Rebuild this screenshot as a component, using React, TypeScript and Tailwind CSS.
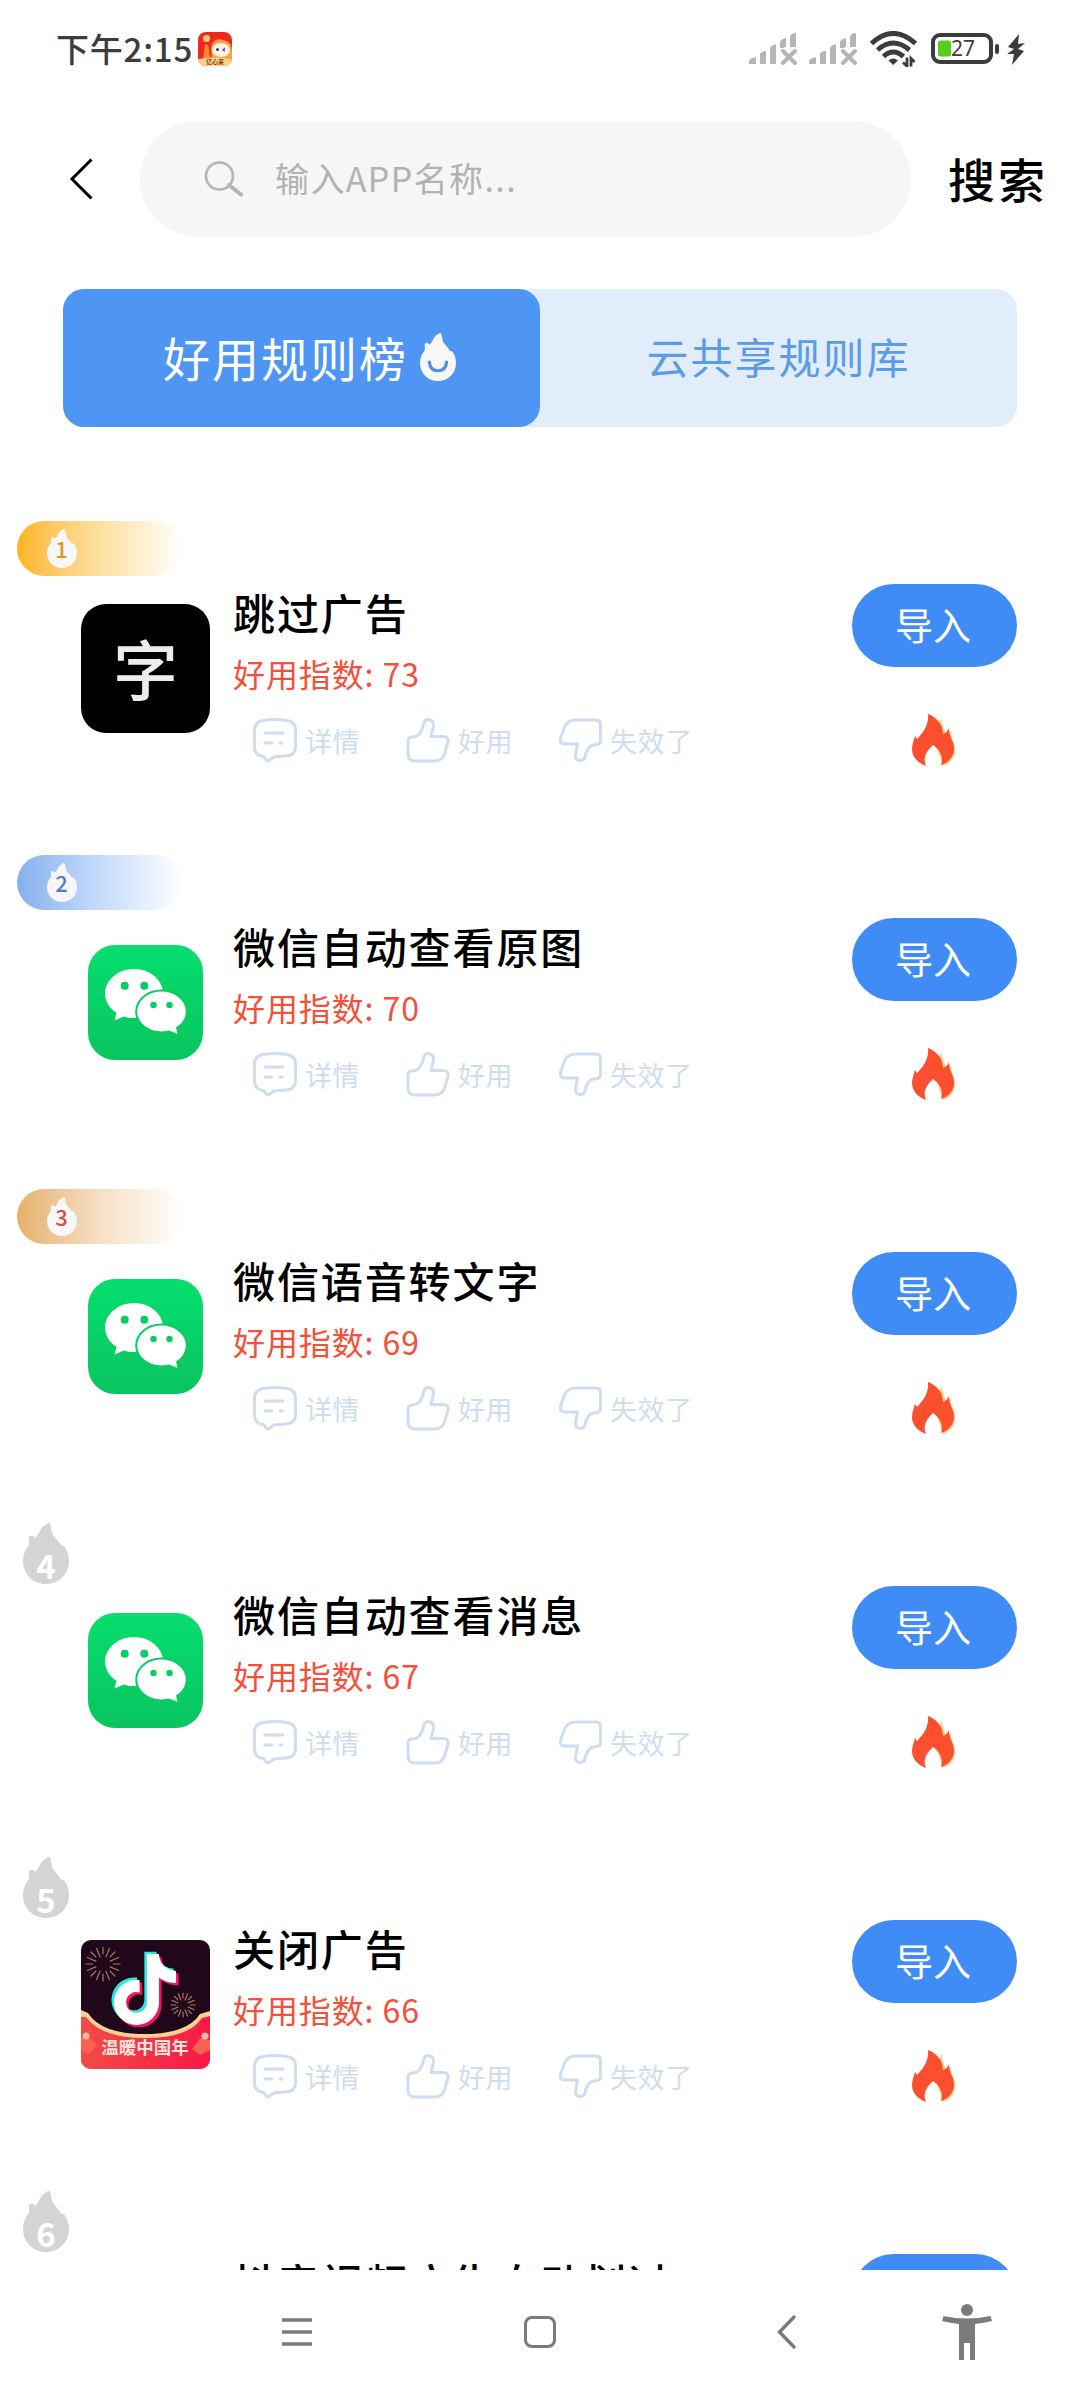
import React from 'react';
import { FaTiktok } from 'react-icons/fa6';

type AppKind = 'word' | 'wechat' | 'douyin';

interface Rule {
  rank: number;
  title: string;
  score: number;
  app: AppKind;
}

const rules: Rule[] = [
  { rank: 1, title: '跳过广告', score: 73, app: 'word' },
  { rank: 2, title: '微信自动查看原图', score: 70, app: 'wechat' },
  { rank: 3, title: '微信语音转文字', score: 69, app: 'wechat' },
  { rank: 4, title: '微信自动查看消息', score: 67, app: 'wechat' },
  { rank: 5, title: '关闭广告', score: 66, app: 'douyin' },
  { rank: 6, title: '抖音视频广告自动划过', score: 65, app: 'douyin' },
];

const FLAME =
  'M23.5 1C26 -1 27.5 0 28 4C28.5 8 29 11 31 13.5C34 17 37 20 38.5 23C40 22.5 41 23 42 24.5C44.5 28 46 33 46 38C46 51 36 61 23 61S0 51 0 38C0 32 2.500 26 6 22C6.500 20 6 17 6 15C6 12 10.500 12 12.500 15C16 11 18 3.500 23.500 1Z';

const SignalIcon = () => (
  <svg className="w-12 h-8" viewBox="0 0 48 32" fill="#b5b5b5">
    <path d="M0 31V28Q1 25 7 24V31ZM11 31V21Q12 18 17 18V31ZM21 31V15Q22 12 27 11V31ZM31 15V9Q32 6 37 5V13L35 15ZM41 14V4Q42 0 47 0V14Z" />
    <path d="M34 18L46 30M46 18L34 30" stroke="#b5b5b5" strokeWidth="4" strokeLinecap="round" />
  </svg>
);

const WifiIcon = () => (
  <svg className="w-[47px] h-9" viewBox="0 0 47 36" fill="none" stroke="#3c3c3c" strokeWidth="5">
    <path d="M1.500 12.500Q23 -7.500 45.500 12.500" />
    <path d="M7.500 19Q23 5 39.500 19" />
    <path d="M13.500 25.500Q23 16.500 33.500 25.500" />
    <path d="M18.500 29.500Q23 25.500 28 29.500L23.200 34Z" fill="#3c3c3c" stroke="none" />
    <path d="M37 26.500V35L33 31.500M41 35.500V27.500L44.500 31" strokeWidth="2.800" />
  </svg>
);

const BatteryIcon = () => (
  <svg className="w-[69px] h-8" viewBox="0 0 69 32">
    <rect x="2" y="2" width="58" height="27" rx="7" fill="none" stroke="#3c3c3c" strokeWidth="4" />
    <rect x="64" y="11" width="4" height="10" rx="2" fill="#3c3c3c" />
    <rect x="7" y="7.500" width="13" height="16" rx="2.500" fill="#52cf1c" />
    <text x="32" y="23" fontSize="21" textAnchor="middle" fill="#3c3c3c" fontFamily="Noto Sans, sans-serif">
      27
    </text>
  </svg>
);

// Tiny launcher icon that sits next to the clock
const NoticeIcon = () => (
  <svg className="w-[34px] h-[34px] rounded-lg" viewBox="0 0 34 34">
    <rect width="34" height="34" fill="#f3271f" />
    <rect x="5" y="3" width="7" height="7" rx="3" fill="#ffc46e" />
    <path d="M7 12Q12 12 11 20L13 27H5Z" fill="#fb8b2f" />
    <path d="M13 15Q16 5 25 8Q34 9 34 20V30H14Z" fill="#f9a13f" />
    <ellipse cx="23" cy="18" rx="9" ry="7" fill="#fff5ee" />
    <circle cx="19.500" cy="17.500" r="1.500" fill="#3a4a48" />
    <path d="M27 16L25 18L27 19" fill="none" stroke="#8035ee" strokeWidth="1.400" />
    <path d="M0 27Q17 24 34 27V34H0Z" fill="#fbd28d" />
    <text x="17" y="32" fontSize="6" fontWeight="700" textAnchor="middle" fill="#8a3a12" fontFamily="Noto Sans CJK SC, sans-serif">
      亿心来
    </text>
  </svg>
);

const StatusBar = () => (
  <div className="flex items-center h-[98px] pl-[56px] pr-[55px]">
    <span className="text-[33px] leading-8 tracking-[0.8px] font-medium text-[#3c3c3c] w-[142px] whitespace-nowrap -mt-0.5">
      下午2:15
    </span>
    <NoticeIcon />
    <div className="ml-auto flex items-center">
      <SignalIcon />
      <div className="w-3" />
      <SignalIcon />
      <div className="w-[13px]" />
      <WifiIcon />
      <div className="w-[14px]" />
      <BatteryIcon />
      <svg className="w-[18px] h-[31px] ml-[7px]" viewBox="0 0 18 31" fill="#3c3c3c">
        <path d="M12 0L1 13L7 15L0 20L7 20L5 31L17 17L11 15L18 9L11 10Z" />
      </svg>
    </div>
  </div>
);

const SearchBar = () => (
  <div className="flex items-center h-[116px] mt-[23px] pl-[69px]">
    <svg className="w-6 h-[42px] shrink-0" viewBox="0 0 24 42" fill="none" stroke="#000" strokeWidth="3">
      <path d="M22.500 1.500L3 21L22.500 40.500" />
    </svg>
    <div className="ml-[47px] w-[771px] h-[116px] shrink-0 rounded-full bg-[#f6f6f6] flex items-center pl-[64px]">
      <svg className="w-10 h-9" viewBox="0 0 40 36" fill="none" stroke="#b4b4b4">
        <circle cx="15.500" cy="15" r="13.500" strokeWidth="2.600" />
        <path d="M25 24L37 33.500" strokeWidth="4" strokeLinecap="round" />
      </svg>
      <span className="ml-[31px] -mt-[3px] text-[34px] tracking-[1.4px] text-[#b2b2b2]">输入APP名称...</span>
    </div>
    <button className="ml-[37px] -mt-[2px] text-[47px] tracking-[3px] font-medium text-black whitespace-nowrap">搜索</button>
  </div>
);

const Tabs = () => (
  <div className="flex ml-[63px] mt-[52px] w-[954px] h-[138px] rounded-[21px] bg-[#e1edfb]">
    <button className="w-[477px] h-full rounded-[21px] bg-[#4f95f3] flex items-center pl-[100px] text-white">
      <span className="-mt-0.5 text-[47px] tracking-[2px] whitespace-nowrap">好用规则榜</span>
      <svg className="w-9 h-12 ml-[12px] -mt-[3px]" viewBox="0 0 46 61" preserveAspectRatio="none">
        <path d={FLAME} fill="#f7f7f7" />
        <path d="M12 37Q13 48 23 48Q33 48 34 37" fill="none" stroke="#4f8fe0" strokeWidth="4" strokeLinecap="round" />
      </svg>
    </button>
    <button className="flex-1 pb-[5px] text-[42px] tracking-[2px] text-[#5b9be8] whitespace-nowrap">云共享规则库</button>
  </div>
);

const badgeStyles: Record<number, string> = {
  1: 'from-[#fdb515] via-[#fee0a0] text-[#d79b1e]',
  2: 'from-[#86b0ec] via-[#c5dbfd] text-[#4d7fc8]',
  3: 'from-[#e6b06a] via-[#f6dfc4] text-[#dc4a3c]',
};

const RankBadge: React.FC<{ rank: number }> = ({ rank }) => {
  if (rank <= 3) {
    return (
      <div className="h-[61px] pl-[17px]">
        <div className={`w-[166px] h-[55px] rounded-full bg-linear-to-r to-white pl-[30px] pt-2 ${badgeStyles[rank]}`}>
          <svg className="w-[30px] h-[39px] overflow-visible" viewBox="0 0 30 39">
            <path d={FLAME} fill="#f7f7f7" transform="scale(.652 .639)" />
            <text x="14.500" y="29" fontSize="22" fontWeight="500" textAnchor="middle" fill="currentColor">
              {rank}
            </text>
          </svg>
        </div>
      </div>
    );
  }
  return (
    <div className="h-[61px] pl-[23px]">
      <svg className="w-[46px] h-[61px] overflow-visible" viewBox="0 0 46 61">
        <path d={FLAME} fill="#d4d4d4" />
        <text x="23" y="56" fontSize="33" fontWeight="600" textAnchor="middle" fill="#fff">
          {rank}
        </text>
      </svg>
    </div>
  );
};

const WechatIcon = () => (
  <svg className="w-[115px] h-[115px]" viewBox="0 0 115 115">
    <defs>
      <linearGradient id="wx" x1="0" y1="0" x2="0" y2="1">
        <stop offset="0" stopColor="#06de6e" />
        <stop offset="1" stopColor="#09c45f" />
      </linearGradient>
    </defs>
    <rect width="115" height="115" rx="27" fill="url(#wx)" />
    <ellipse cx="46" cy="48.500" rx="29" ry="24.500" fill="#fff" />
    <path d="M29 66L26.500 75.500L37 71Z" fill="#fff" />
    <circle cx="36.700" cy="40.700" r="4" fill="#08cd64" />
    <circle cx="56.300" cy="40.700" r="4" fill="#08cd64" />
    <ellipse cx="73.500" cy="66.500" rx="25.300" ry="21" fill="#fff" stroke="#08cb63" strokeWidth="2" />
    <path d="M80 85L89.500 89L87.500 80Z" fill="#fff" />
    <circle cx="65.500" cy="60" r="3.200" fill="#08cd64" />
    <circle cx="81.500" cy="60" r="3.200" fill="#08cd64" />
  </svg>
);

const Firework: React.FC<{ cx: number; cy: number; r: number }> = ({ cx, cy, r }) => (
  <g stroke="#a07868" strokeWidth="1.200" strokeLinecap="round">
    {Array.from({ length: 16 }, (_, i) => (
      <line
        key={i}
        x1={cx}
        x2={cx}
        y1={cy - r}
        y2={cy - r * (i % 2 ? 0.45 : 0.6)}
        transform={`rotate(${i * 22.5} ${cx} ${cy})`}
      />
    ))}
  </g>
);

const DouyinIcon = () => (
  <svg className="w-[129px] h-[129px] rounded-[10px]" viewBox="0 0 129 129">
    <defs>
      <linearGradient id="dyRed" x1="0" y1="0" x2="1" y2="0">
        <stop offset="0" stopColor="#f04c45" />
        <stop offset="1" stopColor="#fb1747" />
      </linearGradient>
    </defs>
    <rect width="129" height="129" fill="#200719" />
    <Firework cx={22} cy={24} r={17} />
    <Firework cx={102} cy={65} r={12} />
    <FaTiktok x={26} y={11.5} size={71} color="#2be8dd" />
    <FaTiktok x={31} y={16.5} size={71} color="#f3155b" />
    <FaTiktok x={28.5} y={14} size={71} color="#fff" />
    <path d="M0 70L7 73Q20 94 64 94Q106 94 119 74L129 71V129H0Z" fill="#fbd192" />
    <path d="M0 77L5 77Q20 98 64 98Q108 98 121 78L129 76V129H0Z" fill="url(#dyRed)" />
    <path d="M0 98L9 98L17 105L7 114L0 110Z" fill="#ff6150" />
    <path d="M119 98L129 100V110L119 115L111 109Z" fill="#ff6150" />
    <circle cx="5" cy="96" r="3.500" fill="#f7b7a8" />
    <circle cx="124" cy="96" r="3.500" fill="#f7b7a8" />
    <text x="64" y="113.500" fontSize="17.500" fontWeight="700" textAnchor="middle" fill="#fde3dc">
      温暖中国年
    </text>
  </svg>
);

const AppIcon: React.FC<{ app: AppKind }> = ({ app }) => {
  if (app === 'wechat') return <WechatIcon />;
  if (app === 'douyin') return <DouyinIcon />;
  return (
    <div className="w-[129px] h-[129px] pb-[3px] rounded-[25px] bg-black text-[#ececec] text-[65px] leading-none font-medium flex items-center justify-center">
      字
    </div>
  );
};

const iconProps = {
  className: 'w-11 h-[45px]',
  viewBox: '0 0 44 45',
  fill: 'none',
  stroke: 'currentColor',
  strokeWidth: 3,
  strokeLinecap: 'round' as const,
  strokeLinejoin: 'round' as const,
};

const DetailIcon = () => (
  <svg {...iconProps}>
    <path d="M10 2.500Q22 0.500 34 2.500Q42.500 4 42.500 12V29Q42.500 37.500 33 38Q25 38.500 21 39L16 42.500Q14 43.500 12.500 41L10.500 38.500Q1.500 37.500 1.500 29V12Q1.500 4 10 2.500Z" />
    <path d="M12 15H30M12 25H18.500M27 25H29" />
  </svg>
);

const ThumbUpIcon = () => (
  <svg {...iconProps}>
    <path d="M2 23Q2 19 6 19Q12 18.500 14 15Q17 11 17.500 6Q18.500 1.500 22.500 1.500Q28 2 27.500 8L25 18.500H37Q43 18.500 42 24L38.500 36Q36 43 29 43H9Q2 43 2 36Z" />
  </svg>
);

const ThumbDownIcon = () => (
  <svg {...iconProps}>
    <path d="M17 2H37Q41.500 2 41.500 6.500V22Q41.500 26.500 37.500 26.500Q31 27 29 31Q26.500 34 26 39Q25 42.500 21 42.500Q16 42 16.500 37L18.500 26H6Q0.500 26 1.500 20L6 8Q9 2 17 2Z" />
  </svg>
);

const FireIcon = () => (
  <svg className="w-11 h-[53px]" viewBox="0 0 44 53">
    <path d="M30 4C29 10 33 14 34 20C36 19 38 17 39 16C38 25 44 28 43 37C43 44 37 50 31 52L20 20Z" fill="#ffd37f" />
    <path
      d="M16 0C24 3 31 10 31 20C34 19 36 17 37 14C37 24 42 26 42 35C42 43 36 49 29 51C32 42 27 35 21 31C16 36 10 42 14 52C6 49 0 43 0 35C0 30 2 26 3 22C4 23 4 24 5 25C12 18 17 10 16 0Z"
      fill="#fb4f30"
    />
  </svg>
);

const RuleItem: React.FC<{ rule: Rule }> = ({ rule }) => {
  return (
    <div className="h-[334px] shrink-0">
      <RankBadge rank={rule.rank} />
      <div className="flex pl-[81px] pr-[63px]">
        <div className="w-[129px] h-[129px] mt-[22px] flex items-center justify-center">
          <AppIcon app={rule.app} />
        </div>
        <div className="ml-[23px] flex-1 whitespace-nowrap">
          <p className="mt-[5px] text-[42px] leading-[50px] tracking-[1.9px] font-medium text-black">{rule.title}</p>
          <p className="mt-[16px] text-[32px] leading-[40px] tracking-[0.9px] text-[#f4503a]">好用指数: {rule.score}</p>
          <div className="flex items-center mt-[25px] ml-[20px] text-[#d0dcf0] text-[27px] tracking-[0.6px] leading-[45px]">
            <DetailIcon />
            <span className="w-[101px] pl-[8px]">详情</span>
            <div className="w-2" />
            <ThumbUpIcon />
            <span className="w-[101px] pl-[8px]">好用</span>
            <div className="w-2" />
            <ThumbDownIcon />
            <span className="pl-[7px]">失效了</span>
          </div>
        </div>
        <div className="w-[165px] mt-[2px] flex flex-col items-center">
          <button className="w-[165px] h-[83px] pb-[4px] pr-[3px] rounded-full bg-[#3f8cf6] text-white text-[38px] leading-none">
            导入
          </button>
          <div className="mt-[47px] -ml-[2px]">
            <FireIcon />
          </div>
        </div>
      </div>
    </div>
  );
};

const NavBar = () => (
  <div className="h-[130px] flex items-center pl-[282px] pr-[88px] pb-[6px] text-[#7b7b7b] bg-white">
    <svg className="w-[30px] h-[30px]" viewBox="0 0 30 30" stroke="currentColor" strokeWidth="3.400">
      <path d="M0 3H30M0 15H30M0 27H30" />
    </svg>
    <div className="ml-[212px] w-8 h-8 rounded-lg border-[3.5px] border-current" />
    <svg className="ml-[221px] w-[19px] h-[34px]" viewBox="0 0 19 34" fill="none" stroke="currentColor" strokeWidth="3.400" strokeLinecap="round">
      <path d="M17 2L2.500 17L17 32" />
    </svg>
    <svg className="ml-auto w-[50px] h-[56px]" viewBox="0 0 50 56" fill="currentColor">
      <circle cx="25" cy="6" r="6" />
      <path d="M1.500 12Q25 17 48.500 12L50 17Q42 19 33 20V56H28V39H22V56H17V20Q8 19 0 17Z" />
    </svg>
  </div>
);

export default function App() {
  return (
    <div className="w-[1080px] h-[2400px] overflow-hidden bg-white flex flex-col font-['Noto_Sans_CJK_SC',sans-serif]">
      <StatusBar />
      <SearchBar />
      <Tabs />
      <div className="mt-[94px] flex-1 min-h-0 overflow-hidden flex flex-col">
        {rules.map((rule) => (
          <RuleItem key={rule.rank} rule={rule} />
        ))}
      </div>
      <NavBar />
    </div>
  );
}
